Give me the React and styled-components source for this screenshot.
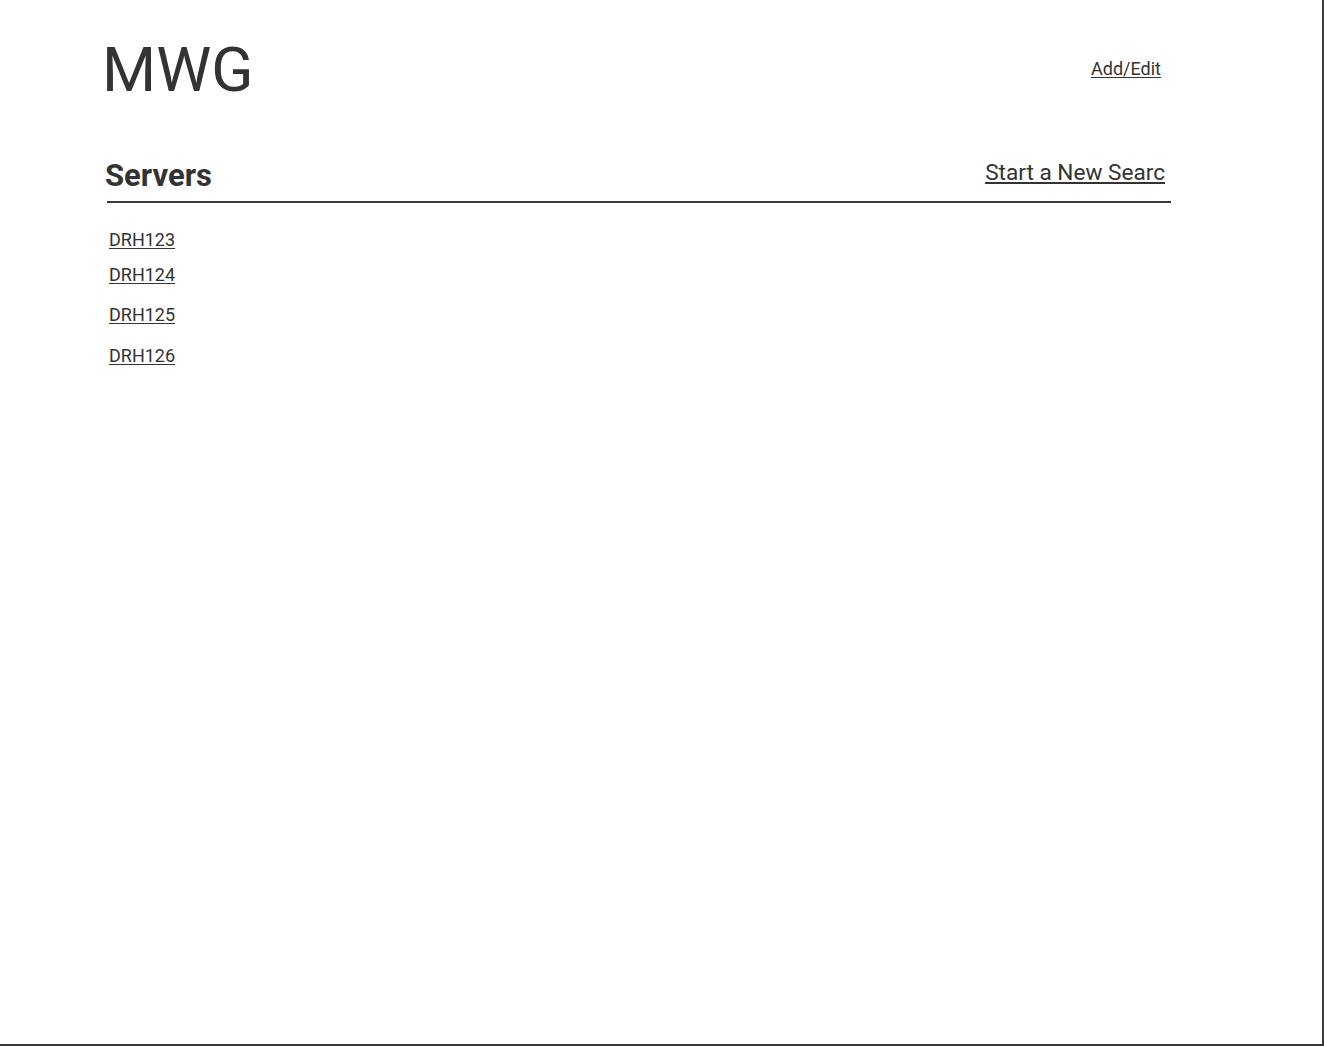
import React from "react";
import styled, { createGlobalStyle } from "styled-components";

const GlobalStyle = createGlobalStyle`
  html, body { margin: 0; padding: 0; background: #ffffff; }
  body { font-family: Roboto, "Liberation Sans", Arial, sans-serif; color: #333333; }
  * { box-sizing: border-box; }
`;

const Frame = styled.div`
  width: 1324px;
  height: 1046px;
  border-right: 2px solid #3a3a3a;
  border-bottom: 2px solid #3a3a3a;
  padding: 0 0 0 107px;
  overflow: hidden;
`;

const Content = styled.div`
  width: 1064px;
`;

const Header = styled.header`
  display: flex;
  justify-content: space-between;
  align-items: flex-start;
  padding-top: 32px;
  padding-right: 10px;
`;

const Logo = styled.h1`
  margin: 0 0 0 -5px;
  font-size: 62px;
  font-weight: 400;
  line-height: 75px;
  color: #333333;
  letter-spacing: 0;
`;

const TextLink = styled.a`
  display: inline-block;
  font-family: Roboto, "Liberation Sans", Arial, sans-serif;
  font-size: ${(p) => p.$size || 18}px;
  color: #333333;
  text-decoration: underline;
  text-underline-offset: 2px;
  cursor: pointer;
  white-space: nowrap;
`;

const HeaderLink = styled(TextLink)`
  margin-top: 26px;
`;

const SectionHead = styled.div`
  display: flex;
  justify-content: space-between;
  align-items: flex-start;
  margin-top: 51px;
  padding: 0 6px 7px 0;
  border-bottom: 2px solid #3a3a3a;
`;

const SectionTitle = styled.h2`
  margin: 0 0 0 -2px;
  font-size: 31px;
  font-weight: 700;
  line-height: 36px;
  color: #333333;
`;

const SearchLink = styled(TextLink)`
  margin-top: 2px;
  line-height: 26px;
`;

const ServerList = styled.ul`
  list-style: none;
  margin: 0;
  padding: 0 0 0 2px;
`;

const ServerItem = styled.li`
  margin-top: ${(p) => p.$gap}px;
  line-height: 21px;
`;

const servers = [
  { name: "DRH123", gap: 26 },
  { name: "DRH124", gap: 13 },
  { name: "DRH125", gap: 18 },
  { name: "DRH126", gap: 19 },
];

export default function App() {
  return (
    <>
      <GlobalStyle />
      <Frame>
        <Content>
          <Header>
            <Logo>MWG</Logo>
            <HeaderLink>Add/Edit</HeaderLink>
          </Header>
          <SectionHead>
            <SectionTitle>Servers</SectionTitle>
            <SearchLink $size={22.6}>Start a New Searc</SearchLink>
          </SectionHead>
          <ServerList>
            {servers.map((s) => (
              <ServerItem key={s.name} $gap={s.gap}>
                <TextLink>{s.name}</TextLink>
              </ServerItem>
            ))}
          </ServerList>
        </Content>
      </Frame>
    </>
  );
}
